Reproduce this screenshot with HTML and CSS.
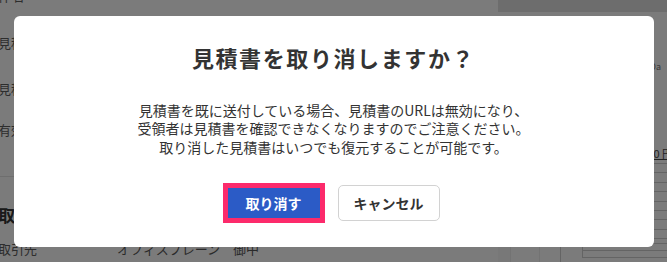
FILE: index.html
```html
<!DOCTYPE html>
<html lang="ja">
<head>
<meta charset="utf-8">
<title>見積書を取り消しますか？</title>
<link rel="stylesheet" href="styles.css">
</head>
<body>
<div class="page">
  <div class="form">
    <div class="fields">
      <div class="field">件名</div>
      <div class="field">見積番号</div>
      <div class="field">見積日</div>
      <div class="field">有効期限</div>
    </div>
    <div class="section">
      <div class="section-title">取引先情報</div>
      <div class="client-row">
        <span class="client-label">取引先</span>
        <span class="client-value">オフィスブレーン　御中</span>
      </div>
    </div>
  </div>
  <div class="preview">
    <div class="preview-head"></div>
    <div class="paper">
      <div class="paper-company">Oa</div>
      <div class="paper-total">1,100,000 円</div>
      <div class="paper-table">
        <div class="row"></div><div class="row"></div><div class="row"></div><div class="row"></div>
        <div class="row"></div><div class="row"></div><div class="row"></div><div class="row"></div>
      </div>
      <div class="paper-foot">
        <div class="foot-cells">
          <div class="cell c1"></div><div class="cell c2"></div><div class="cell c3"></div>
        </div>
        <div class="foot-table">
          <div class="frow"></div><div class="frow"></div>
        </div>
      </div>
    </div>
  </div>
</div>

<div class="overlay">
  <div class="modal" role="dialog">
    <h2 class="modal-title">見積書を取り消しますか？</h2>
    <p class="modal-text">見積書を既に送付している場合、見積書のURLは無効になり、<br>受領者は見積書を確認できなくなりますのでご注意ください。<br>取り消した見積書はいつでも復元することが可能です。</p>
    <div class="modal-actions">
      <button class="btn btn-danger">取り消す</button>
      <button class="btn btn-cancel">キャンセル</button>
    </div>
  </div>
</div>
</body>
</html>
```

FILE: styles.css
```css
* { box-sizing: border-box; }

html, body {
  margin: 0;
  padding: 0;
  width: 667px;
  height: 262px;
  overflow: hidden;
}

body {
  font-family: "Noto Sans CJK JP", "Noto Sans", sans-serif;
  color: #333;
  background: #f6f6f6;
}

.page {
  display: flex;
  width: 667px;
  height: 262px;
  overflow: hidden;
}

/* ---------- background form ---------- */
.form {
  width: 500px;
  flex: none;
  margin-left: -2px;
}

.fields {
  display: grid;
  grid-template-rows: 47px 46px 41px 46px;
  margin-top: -18px;
  border-bottom: 1px solid #dcdcdc;
  height: 195px;
}

.field {
  font-size: 13px;
  line-height: 28px;
  color: #5a5a5a;
}

.section {
  padding-top: 26px;
}

.section-title {
  font-size: 17px;
  font-weight: bold;
  line-height: 24px;
  color: #333;
}

.client-row {
  display: flex;
  margin-top: 12px;
  font-size: 13px;
  line-height: 20px;
  color: #5a5a5a;
}

.client-label { width: 119px; }
.client-value { color: #555; }

/* ---------- background preview ---------- */
.preview {
  flex: 1;
  display: flex;
  flex-direction: column;
  min-width: 0;
}

.preview-head {
  height: 12px;
  background: #dadada;
  flex: none;
}

.paper {
  flex: 1;
  background: #f6f6f6;
  padding-left: 63px;
}

.paper-company {
  margin-top: 49px;
  font-size: 9px;
  line-height: 12px;
  color: #777;
  text-align: right;
  margin-right: 6px;
}

.paper-total {
  margin-top: 73px;
  font-size: 11px;
  line-height: 14px;
  color: #444;
  text-align: right;
  margin-right: -6px;
  text-decoration: underline;
}

.paper-table {
  margin-top: 3px;
  border-top: 1px solid #c9c9c9;
}

.paper-table .row {
  height: 9.4px;
  border-bottom: 1px solid #c9c9c9;
}

.paper-foot {
  display: flex;
  margin-left: -63px;
  margin-top: 4px;
  height: 20px;
}

.foot-cells {
  display: flex;
  width: 63px;
  flex: none;
}

.cell { height: 20px; border-right: 1px solid #e6e6e6; }
.c1 { width: 13px; background: #f0f0f0; }
.c2 { width: 29px; }
.c3 { width: 21px; border-right-color: #c9c9c9; }

.foot-table {
  flex: 1;
  border-top: 1px solid #c9c9c9;
  display: flex;
  flex-direction: column;
}

.frow {
  height: 7px;
  border-bottom: 1px solid #c9c9c9;
  margin-left: 21px;
  border-left: 1px solid #c9c9c9;
}

/* ---------- overlay / modal ---------- */
.overlay {
  position: fixed;
  inset: 0;
  background: rgba(0, 0, 0, 0.5);
  display: flex;
  align-items: center;
  justify-content: center;
}

.modal {
  width: 640px;
  height: 231px;
  background: #fff;
  border-radius: 6px;
  display: flex;
  flex-direction: column;
  align-items: center;
  padding-top: 25px;
}

.modal-title {
  margin: 0;
  font-size: 22px;
  line-height: 32px;
  font-weight: bold;
  letter-spacing: 1.6px;
  color: #333;
}

.modal-text {
  margin: 28px 0 0;
  font-size: 14px;
  line-height: 18.5px;
  text-align: center;
  color: #333;
}

.modal-actions {
  display: flex;
  align-items: center;
  gap: 13px;
  margin-top: 27px;
  margin-right: 5px;
}

.btn {
  font-family: "Noto Sans CJK JP", "Noto Sans", sans-serif;
  font-size: 14px;
  font-weight: bold;
  width: 102px;
  padding: 0;
  cursor: pointer;
}

.btn-danger {
  height: 40px;
  background: #2b5bc6;
  color: #fff;
  border: 5px solid #fc2a6b;
  border-radius: 0;
}

.btn-cancel {
  height: 36px;
  background: #fff;
  color: #333;
  border: 1px solid #d2d2d2;
  border-radius: 5px;
}
```
